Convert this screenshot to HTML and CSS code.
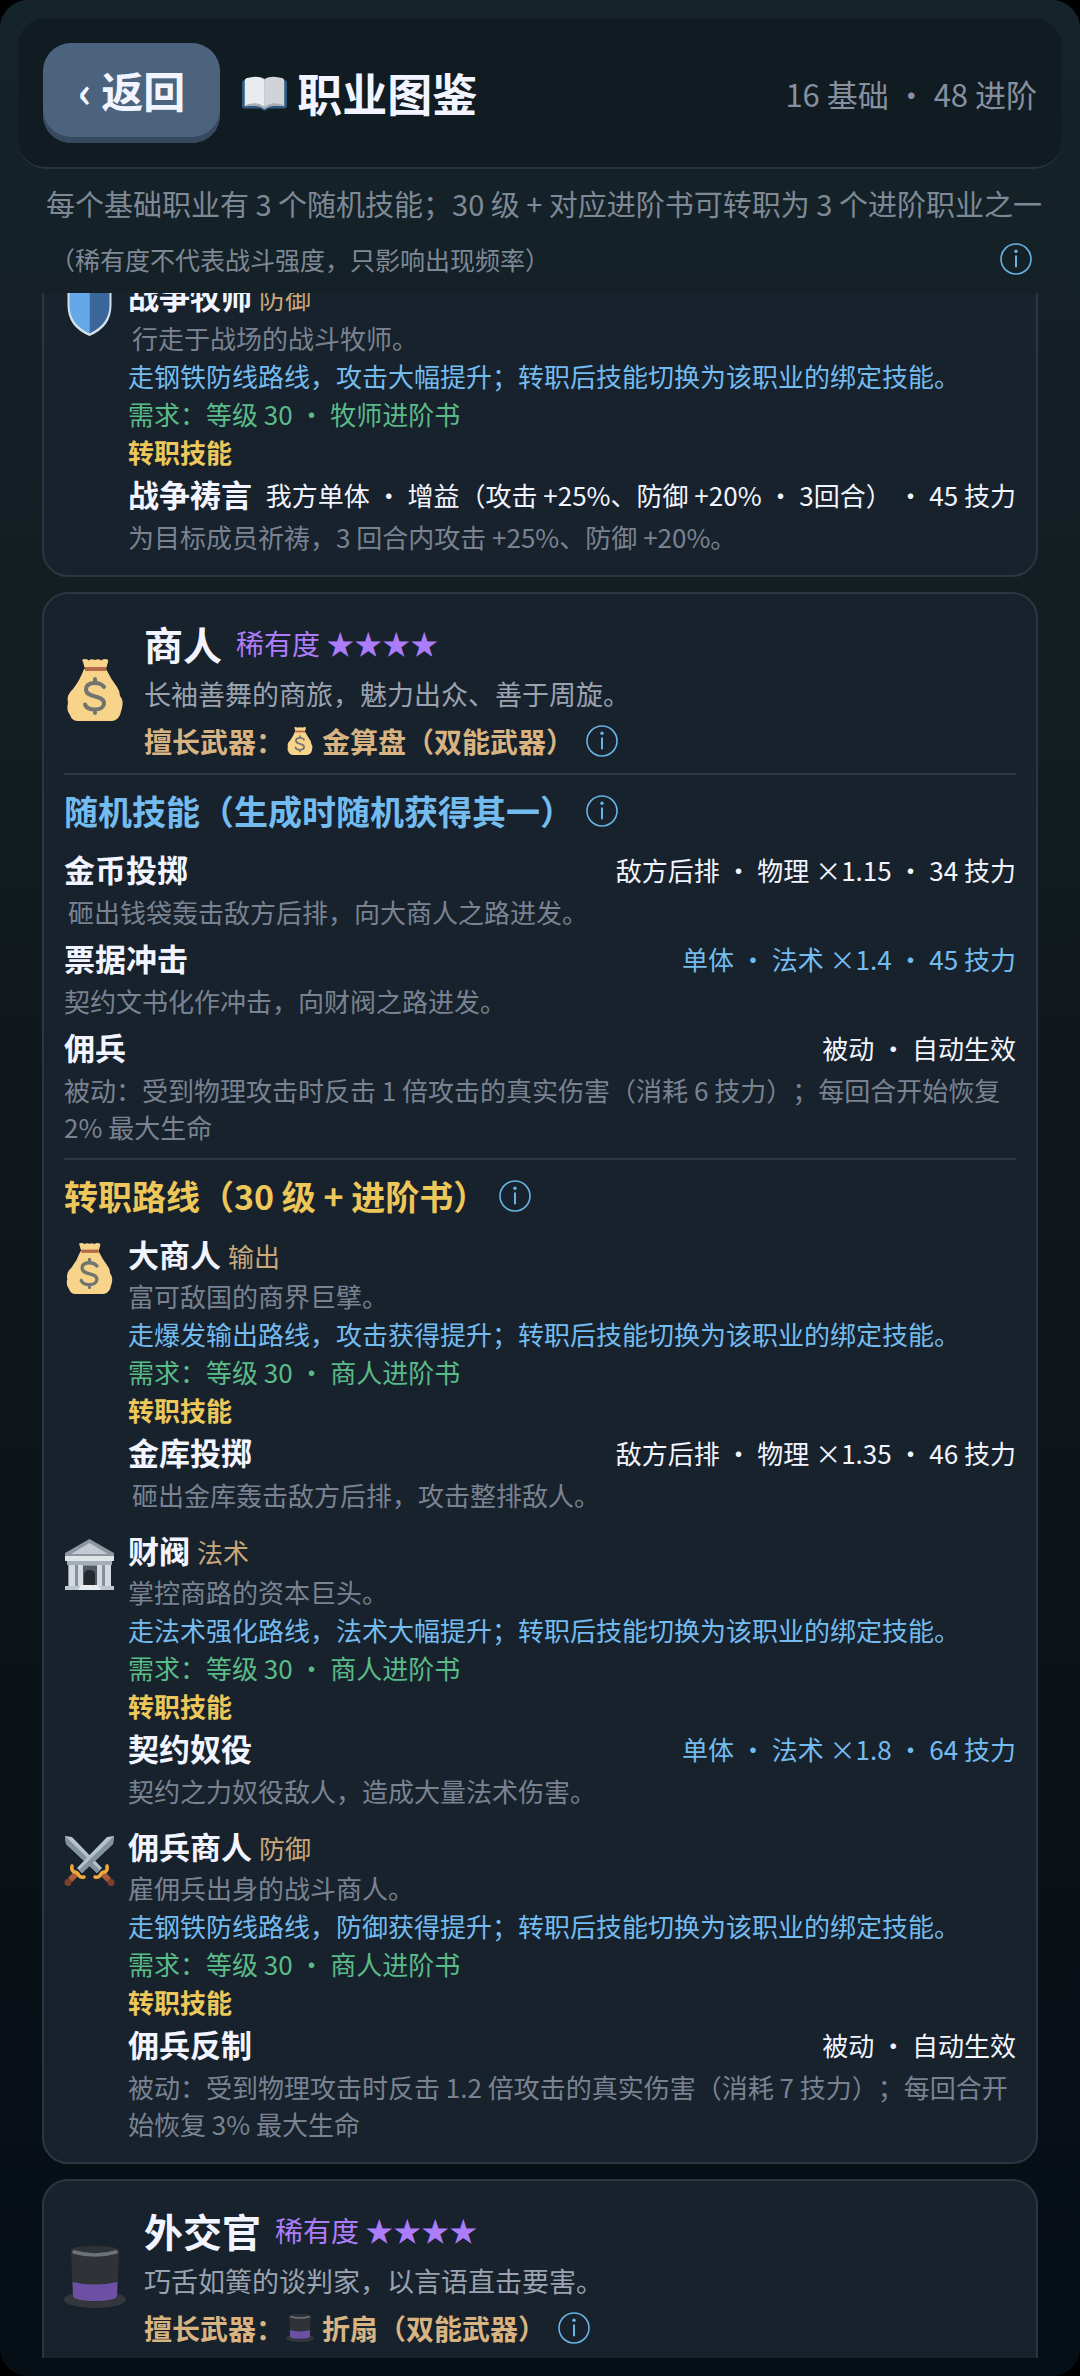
FILE: index.html
```html
<!DOCTYPE html>
<html lang="zh-CN">
<head>
<meta charset="utf-8">
<meta name="viewport" content="width=device-width, initial-scale=1">
<title>职业图鉴</title>
<link rel="stylesheet" href="styles.css">
</head>
<body>
<svg class="sprite" aria-hidden="true">
  <symbol id="info" viewBox="0 0 32 32">
    <circle cx="16" cy="16" r="15" fill="none" stroke="currentColor" stroke-width="1.6"/>
    <circle cx="16" cy="8.2" r="1.7" fill="currentColor"/>
    <path d="M16 12.4v11.8" stroke="currentColor" stroke-width="2"/>
  </symbol>
  <symbol id="book" viewBox="0 0 64 50">
    <path d="M3 7h58q3 0 3 3v33q0 4-4 4H37q-1 3-5 3t-5-3H4q-4 0-4-4V10q0-3 3-3z" fill="#31587f"/>
    <path d="M4 8h56v35H4z" fill="#7fa3c4"/>
    <path d="M6 4Q22-1 32 5v40q-11-6-28-1V7q0-2 2-3z" fill="#e9ecef"/>
    <path d="M58 4Q42-1 32 5v40q11-6 28-1V7q0-2-2-3z" fill="#d0d4d8"/>
    <path d="M5 42q17-6 27 3 10-9 27-3v2q-17-3-27 4-10-7-27-4z" fill="#a9afb5"/>
  </symbol>
  <symbol id="bag" viewBox="0 0 62 62">
    <path d="M19 3q-2-3 2-3 3 0 4 1.500 2-2 6-.5 4-1.500 6 .5 1-1.500 4-1.500 4 0 3 3l-2 7H21z" fill="#f8d48a"/>
    <path d="M20 10h22q5 10 11 18 3 4 3 9 4 4 2 12l-2 7q-3 6-9 6H14q-6 0-8-6-4-5-2-12-2-8 5-14 7-9 11-20z" fill="#f8d48a"/>
    <path d="M21 8h21v4H21z" fill="#b56b48"/>
    <path d="M40 28q-3-4-9-4-9 0-9 6.500c0 9 18 5 18 13.500 0 4-4 6.500-9 6.500-6 0-9-2-10-5M31 20v4M31 50.500V54" fill="none" stroke="#72756f" stroke-width="4" stroke-linecap="round"/>
  </symbol>
  <symbol id="hat" viewBox="0 0 62 62">
    <ellipse cx="31" cy="53.500" rx="31" ry="8.500" fill="#33373c"/>
    <path d="M7 5q0-5 24-5t24 5l-2 46q-1 5-22 5T9 51z" fill="#2f3338"/>
    <path d="M8.500 36q22 5 45 0L53 50q-1 5-22 5T9 50z" fill="#6b50a3"/>
    <path d="M10 6q21 6 42 0" fill="none" stroke="#6c7379" stroke-width="3.500" stroke-linecap="round"/>
  </symbol>
  <symbol id="shield" viewBox="0 0 51 51">
    <path d="M25.500 0q9 5 22 5v15q0 22-22 31Q3.500 42 3.500 20V5q13 0 22-5z" fill="#d3e0ea"/>
    <path d="M25.500 2.500V48.500Q5.500 39 5.500 20V7q12 0 20-4.500z" fill="#64a8ea"/>
    <path d="M25.500 2.500V48.500q20-9.500 20-28.500V7q-12 0-20-4.500z" fill="#3a669b"/>
  </symbol>
  <symbol id="bank" viewBox="0 0 51 51">
    <path d="M4 25h43v22H4z" fill="#87919c"/>
    <path d="M16 27h19v20H16z" fill="#4f5964"/>
    <path d="M20 47V36q0-5 5.500-5t5.500 5v11z" fill="#22282e"/>
    <path d="M5 26h6v21H5zM14 26h5v21h-5zM33 26h5v21h-5zM41 26h6v21h-6z" fill="#d4dae0"/>
    <path d="M25.500 0L50 14v4H1v-4z" fill="#8d959e"/>
    <path d="M25.500 4L44 15H7z" fill="#c3cad1"/>
    <path d="M1 17h49v5H1z" fill="#dfe4e8"/>
    <path d="M3 22h45v4H3z" fill="#a4adb6"/>
    <path d="M1 47h49v4H1z" fill="#bfc7cf"/>
    <path d="M17 46h17l3 5H14z" fill="#e8ecf0"/>
  </symbol>
  <symbol id="sword" viewBox="0 0 51 51">
    <path d="M1 1l7 1 30 31-5 5L2 9z" fill="#b4c3cd"/>
    <path d="M1 1l35 34-3 3L2 9z" fill="#82939f"/>
    <path d="M37 37l8 8" stroke="#a65b3d" stroke-width="6"/>
    <circle cx="47" cy="47.500" r="3.500" fill="#7f3f2a"/>
    <path d="M31 42q4 1 6-3 1-2 4-2 3-2 2-6" fill="none" stroke="#eda93c" stroke-width="3.500" stroke-linecap="round"/>
  </symbol>
  <symbol id="swords" viewBox="0 0 51 51">
    <use href="#sword" width="51" height="51"/>
    <g transform="translate(51 0) scale(-1 1)"><use href="#sword" width="51" height="51"/></g>
  </symbol>
</svg>

<main class="app">
  <header class="topbar">
    <button class="back" type="button">‹ 返回</button>
    <h1 class="title"><svg class="title-icon" aria-hidden="true"><use href="#book"/></svg>职业图鉴</h1>
    <p class="count">16 基础 • 48 进阶</p>
  </header>

  <div class="intro">
    <p class="intro-main">每个基础职业有 3 个随机技能；30 级 + 对应进阶书可转职为 3 个进阶职业之一</p>
    <div class="intro-note">
      <p>（稀有度不代表战斗强度，只影响出现频率）</p>
      <button class="info" type="button" aria-label="说明"><svg><use href="#info"/></svg></button>
    </div>
  </div>

  <div class="list">
    <article class="card card-scrolled">
      <div class="path">
        <svg class="path-icon" aria-hidden="true"><use href="#shield"/></svg>
        <div class="path-body">
          <h4 class="name">战争牧师 <span class="tag">防御</span></h4>
          <p class="line muted indent">行走于战场的战斗牧师。</p>
          <p class="line blue">走钢铁防线路线，攻击大幅提升；转职后技能切换为该职业的绑定技能。</p>
          <p class="line green">需求：等级 30 • 牧师进阶书</p>
          <p class="line label">转职技能</p>
          <div class="skill">
            <h5 class="name">战争祷言</h5>
            <p class="effect">我方单体 • 增益（攻击 +25%、防御 +20% • 3回合） • 45 技力</p>
          </div>
          <p class="desc">为目标成员祈祷，3 回合内攻击 +25%、防御 +20%。</p>
        </div>
      </div>
    </article>

    <article class="card">
      <div class="class-head">
        <svg class="class-icon" aria-hidden="true"><use href="#bag"/></svg>
        <div>
          <h2 class="class-name">商人 <span class="rarity">稀有度 ★★★★</span></h2>
          <p class="class-desc">长袖善舞的商旅，魅力出众、善于周旋。</p>
          <p class="weapon">擅长武器：<svg class="weapon-icon" aria-hidden="true"><use href="#bag"/></svg>金算盘（双能武器）<button class="info" type="button" aria-label="武器说明"><svg><use href="#info"/></svg></button></p>
        </div>
      </div>

      <section class="section">
        <h3 class="heading blue">随机技能（生成时随机获得其一）<button class="info" type="button" aria-label="随机技能说明"><svg><use href="#info"/></svg></button></h3>
        <div class="skills">
          <div>
            <div class="skill">
              <h4 class="name">金币投掷</h4>
              <p class="effect">敌方后排 • 物理 ×1.15 • 34 技力</p>
            </div>
            <p class="desc indent">砸出钱袋轰击敌方后排，向大商人之路进发。</p>
          </div>
          <div>
            <div class="skill">
              <h4 class="name">票据冲击</h4>
              <p class="effect blue">单体 • 法术 ×1.4 • 45 技力</p>
            </div>
            <p class="desc">契约文书化作冲击，向财阀之路进发。</p>
          </div>
          <div>
            <div class="skill">
              <h4 class="name">佣兵</h4>
              <p class="effect">被动 • 自动生效</p>
            </div>
            <p class="desc">被动：受到物理攻击时反击 1 倍攻击的真实伤害（消耗 6 技力）；每回合开始恢复 2% 最大生命</p>
          </div>
        </div>
      </section>

      <section class="section">
        <h3 class="heading yellow">转职路线（30 级 + 进阶书）<button class="info" type="button" aria-label="转职路线说明"><svg><use href="#info"/></svg></button></h3>
        <div class="paths">
          <div class="path">
            <svg class="path-icon" aria-hidden="true"><use href="#bag"/></svg>
            <div class="path-body">
              <h4 class="name">大商人 <span class="tag">输出</span></h4>
              <p class="line muted">富可敌国的商界巨擘。</p>
              <p class="line blue">走爆发输出路线，攻击获得提升；转职后技能切换为该职业的绑定技能。</p>
              <p class="line green">需求：等级 30 • 商人进阶书</p>
              <p class="line label">转职技能</p>
              <div class="skill">
                <h5 class="name">金库投掷</h5>
                <p class="effect">敌方后排 • 物理 ×1.35 • 46 技力</p>
              </div>
              <p class="desc indent">砸出金库轰击敌方后排，攻击整排敌人。</p>
            </div>
          </div>
          <div class="path">
            <svg class="path-icon" aria-hidden="true"><use href="#bank"/></svg>
            <div class="path-body">
              <h4 class="name">财阀 <span class="tag">法术</span></h4>
              <p class="line muted">掌控商路的资本巨头。</p>
              <p class="line blue">走法术强化路线，法术大幅提升；转职后技能切换为该职业的绑定技能。</p>
              <p class="line green">需求：等级 30 • 商人进阶书</p>
              <p class="line label">转职技能</p>
              <div class="skill">
                <h5 class="name">契约奴役</h5>
                <p class="effect blue">单体 • 法术 ×1.8 • 64 技力</p>
              </div>
              <p class="desc">契约之力奴役敌人，造成大量法术伤害。</p>
            </div>
          </div>
          <div class="path">
            <svg class="path-icon" aria-hidden="true"><use href="#swords"/></svg>
            <div class="path-body">
              <h4 class="name">佣兵商人 <span class="tag">防御</span></h4>
              <p class="line muted">雇佣兵出身的战斗商人。</p>
              <p class="line blue">走钢铁防线路线，防御获得提升；转职后技能切换为该职业的绑定技能。</p>
              <p class="line green">需求：等级 30 • 商人进阶书</p>
              <p class="line label">转职技能</p>
              <div class="skill">
                <h5 class="name">佣兵反制</h5>
                <p class="effect">被动 • 自动生效</p>
              </div>
              <p class="desc">被动：受到物理攻击时反击 1.2 倍攻击的真实伤害（消耗 7 技力）；每回合开始恢复 3% 最大生命</p>
            </div>
          </div>
        </div>
      </section>
    </article>

    <article class="card">
      <div class="class-head">
        <svg class="class-icon" aria-hidden="true"><use href="#hat"/></svg>
        <div>
          <h2 class="class-name">外交官 <span class="rarity">稀有度 ★★★★</span></h2>
          <p class="class-desc">巧舌如簧的谈判家，以言语直击要害。</p>
          <p class="weapon">擅长武器：<svg class="weapon-icon" aria-hidden="true"><use href="#hat"/></svg>折扇（双能武器）<button class="info" type="button" aria-label="武器说明"><svg><use href="#info"/></svg></button></p>
        </div>
      </div>
      <section class="section"></section>
    </article>
  </div>
</main>
</body>
</html>
```
FILE: styles.css
```css
* {
  box-sizing: border-box;
}

body {
  margin: 0;
  background: #000;
  color: #f2f5ff;
  font-family: "Noto Sans CJK SC", "Noto Sans", sans-serif;
  font-size: 26px;
  text-spacing-trim: space-all;
}

h1, h2, h3, h4, h5, p {
  margin: 0;
}

button {
  border: 0;
  font-family: inherit;
  cursor: pointer;
}

.sprite {
  display: none;
}

.app {
  display: flex;
  flex-direction: column;
  height: 100vh;
  padding: 18px;
  border-radius: 28px;
  background: linear-gradient(#15232a, #131e23 25%, #0f161c 50%, #0a1117 75%, #060e16);
}

/* Top bar */
.topbar {
  display: flex;
  align-items: center;
  gap: 22px;
  padding: 25px 25px 24px;
  border-bottom: 2px solid #26343d;
  border-radius: 28px;
  background: #111c22;
}

.back {
  padding: 0 35px 6px;
  border-radius: 28px;
  background: #4c637e;
  box-shadow: inset 0 -6px #374960;
  color: #f2f5ff;
  font-size: 42px;
  font-weight: 700;
  line-height: 94px;
}

.title {
  display: flex;
  align-items: center;
  gap: 10px;
  font-size: 45px;
  line-height: 64px;
}

.title-icon {
  width: 45px;
  height: 36px;
}

.count {
  margin-left: auto;
  color: #8790a0;
  font-size: 31px;
}

/* Intro */
.intro {
  padding: 9px 0 3px 28px;
  color: #7f8996;
}

.intro-main {
  font-size: 29px;
  line-height: 50px;
}

.intro-note {
  display: flex;
  align-items: center;
  justify-content: space-between;
  padding: 0 30px 0 4px;
  font-size: 25px;
  line-height: 62px;
}

.info {
  display: block;
  flex: none;
  padding: 0;
  background: none;
  color: #68b4e4;
}

.info svg {
  display: block;
  width: 32px;
  height: 32px;
}

/* Scrolling list of classes */
.list {
  display: flex;
  flex: 1;
  flex-direction: column;
  gap: 15px;
  min-height: 0;
  padding: 0 24px;
  overflow: hidden;
}

.card {
  flex: none;
  padding: 20px;
  border: 2px solid #2a3742;
  border-radius: 26px;
  background: #17222d;
}

.card-scrolled {
  margin-top: -42px;
}

.class-head {
  display: flex;
  align-items: center;
  gap: 18px;
  padding: 3px 0 8px;
}

.class-icon {
  width: 62px;
  height: 62px;
}

.class-name {
  display: flex;
  align-items: center;
  gap: 14px;
  font-size: 39px;
  line-height: 52px;
}

.rarity {
  color: #ad7cfa;
  font-size: 28px;
  font-weight: 400;
}

.class-desc {
  color: #9ba2b0;
  font-size: 27px;
  line-height: 50px;
}

.weapon {
  display: flex;
  align-items: center;
  color: #d8b483;
  font-size: 28px;
  font-weight: 700;
  line-height: 44px;
}

.weapon-icon {
  width: 28px;
  height: 28px;
  margin: 0 8px 0 2px;
}

.weapon .info,
.heading .info {
  margin-left: 12px;
}

.section {
  margin-top: 2px;
  padding-top: 12px;
  border-top: 2px solid #2b3844;
}

.section + .section {
  margin-top: 13px;
}

.heading {
  display: flex;
  align-items: center;
  margin-bottom: 11px;
  font-size: 34px;
  line-height: 48px;
}

.skills {
  display: grid;
  gap: 5px;
}

.skill {
  display: flex;
  align-items: center;
  justify-content: space-between;
  padding-bottom: 1px;
}

.name {
  font-size: 31px;
  line-height: 46px;
}

.desc {
  color: #7a8292;
  line-height: 37px;
}

.indent {
  padding-left: 4px;
}

.paths {
  display: grid;
  gap: 14px;
}

.path {
  display: flex;
  align-items: flex-start;
  gap: 13px;
}

.path-icon {
  flex: none;
  width: 51px;
  height: 51px;
  margin-top: 12px;
}

.path-body {
  flex: 1;
}

.tag {
  color: #c9a77a;
  font-size: 26px;
  font-weight: 400;
  line-height: 1;
}

.line {
  line-height: 38px;
}

.muted {
  color: #7a8292;
}

.blue {
  color: #74bcf0;
}

.green {
  color: #5abb88;
}

.yellow {
  color: #eec75a;
}

.label {
  color: #eec75a;
  font-weight: 700;
}
```
